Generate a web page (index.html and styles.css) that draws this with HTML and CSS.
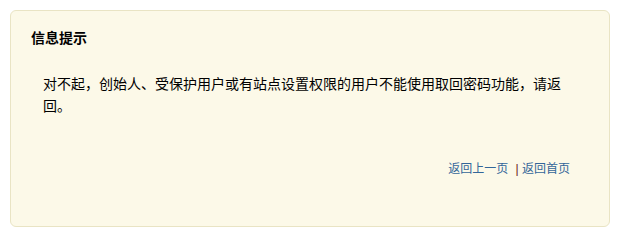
FILE: index.html
```html
<!DOCTYPE html>
<html lang="zh-CN">
<head>
<meta charset="utf-8">
<title>信息提示</title>
<link rel="stylesheet" href="styles.css">
</head>
<body>
<div class="alert-box">
  <h3 class="alert-title">信息提示</h3>
  <p class="alert-msg">对不起，创始人、受保护用户或有站点设置权限的用户不能使用取回密码功能，请返回。</p>
  <div class="alert-links">
    <a href="#" class="link">返回上一页</a>
    <span class="sep">|</span>
    <a href="#" class="link">返回首页</a>
  </div>
</div>
</body>
</html>
```
FILE: styles.css
```css
html, body {
  margin: 0;
  padding: 0;
  background: #ffffff;
}
body {
  padding: 10px 7px 6px 10px;
  font-family: "Liberation Sans", "Noto Sans CJK SC", sans-serif;
  color: #000;
}
.alert-box {
  height: 217px;
  box-sizing: border-box;
  background: #fcf9e8;
  border: 1px solid #e9e4c4;
  border-radius: 6px;
  padding: 0 20px;
  display: flex;
  flex-direction: column;
}
.alert-title {
  margin: 0;
  padding-top: 17px;
  font-size: 14px;
  line-height: 20px;
  font-weight: bold;
}
.alert-msg {
  margin: 0;
  padding: 25px 24px 0 12px;
  font-size: 14px;
  line-height: 22px;
}
.alert-links {
  margin-top: 43px;
  padding-right: 19px;
  text-align: right;
  font-size: 12px;
  line-height: 18px;
}
.link {
  color: #336699;
  text-decoration: none;
}
.sep {
  color: #6b1a1a;
  margin: 0 0 0 4px;
}
```
